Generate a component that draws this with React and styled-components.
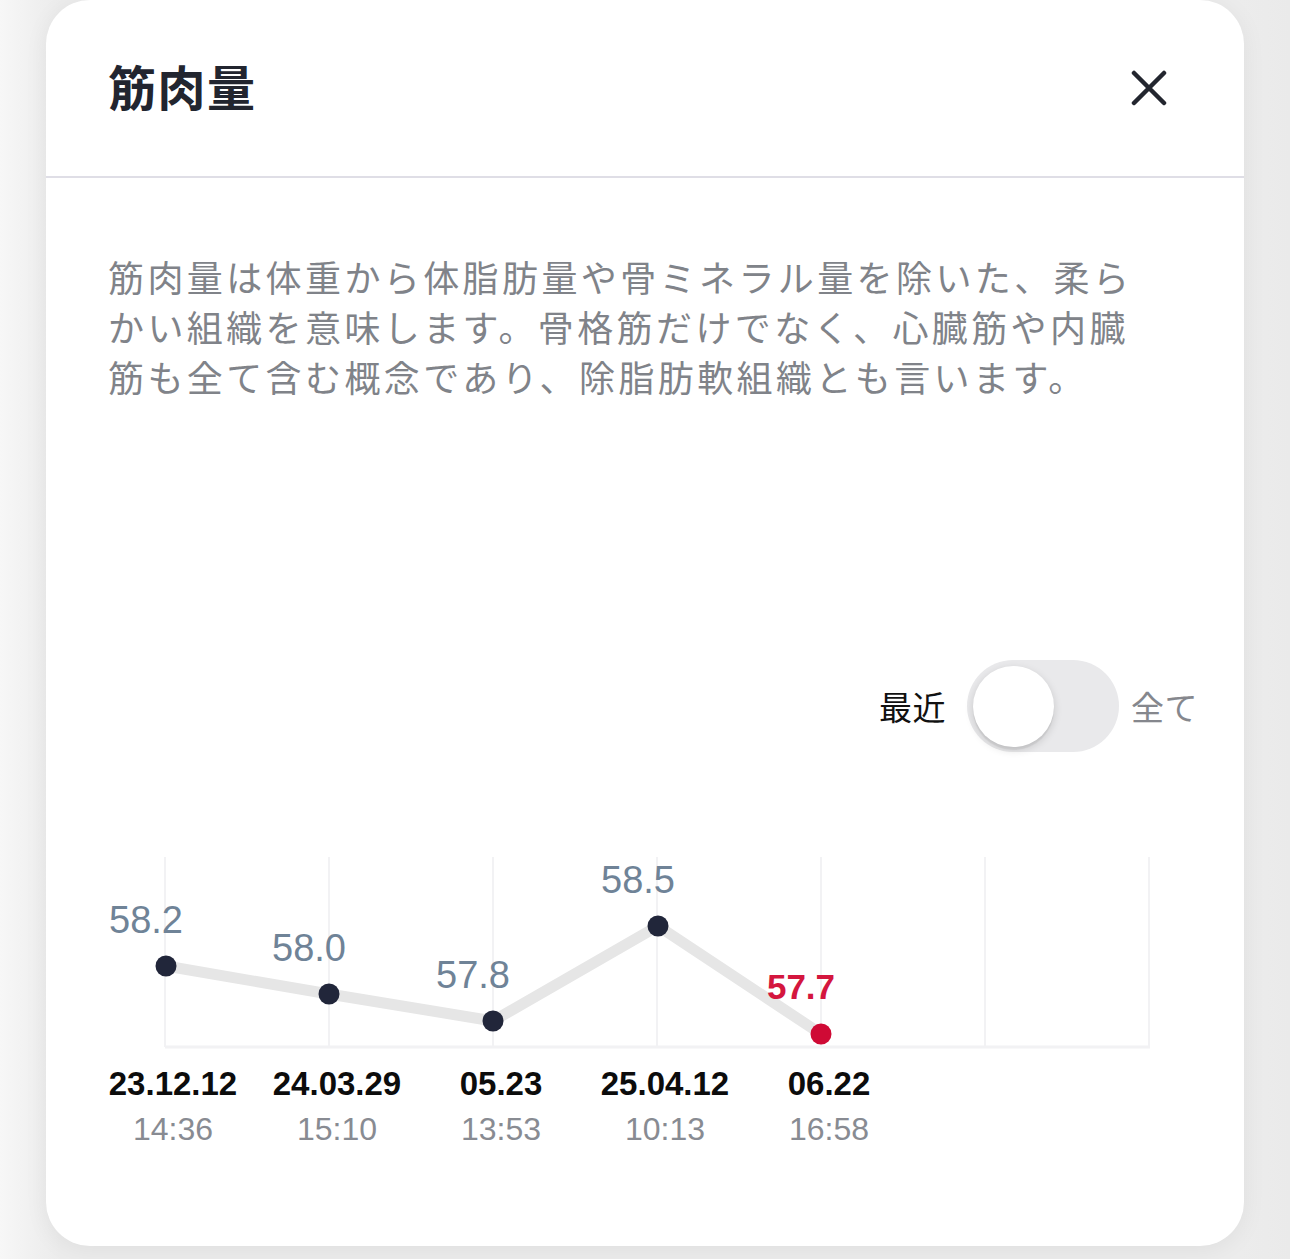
import React from "react";
import styled, { createGlobalStyle } from "styled-components";

const Global = createGlobalStyle`
  html, body { margin: 0; padding: 0; }
  body {
    background: #ececec;
    font-family: "Noto Sans CJK JP", "Noto Sans", sans-serif;
    width: 1290px;
    height: 1259px;
    overflow: hidden;
  }
`;

const Page = styled.div`
  width: 1290px;
  height: 1259px;
  background: linear-gradient(to right, #f7f7f7 0px, #efefef 40px, #ececec 60px, #ececec 1240px, #eaeaea 1290px);
  padding-left: 46px;
  box-sizing: border-box;
`;

const Modal = styled.div`
  width: 1198px;
  height: 1246px;
  background: #ffffff;
  border-radius: 44px;
  box-shadow: 0 4px 24px rgba(0, 0, 0, 0.06);
  display: flex;
  flex-direction: column;
  overflow: hidden;
`;

const Header = styled.div`
  height: 176px;
  flex: none;
  display: flex;
  align-items: center;
  justify-content: space-between;
  padding: 0 77px 0 62px;
  border-bottom: 2px solid #dfdee6;
`;

const Title = styled.h1`
  margin: 0 0 6px;
  font-size: 48px;
  font-weight: 700;
  color: #22252f;
  letter-spacing: 1.5px;
  line-height: 1;
`;

const CloseButton = styled.button`
  width: 36px;
  height: 36px;
  padding: 0;
  border: none;
  background: none;
  display: flex;
  cursor: pointer;
`;

const Body = styled.div`
  padding: 73px 46px 0 62px;
  display: flex;
  flex-direction: column;
`;

const Description = styled.p`
  margin: 0;
  max-width: 1040px;
  font-size: 36px;
  letter-spacing: 3.4px;
  line-height: 50px;
  color: #808389;
`;

const ToggleRow = styled.div`
  margin-top: 259px;
  display: flex;
  align-items: center;
  justify-content: flex-end;
`;

const ToggleLabel = styled.span`
  font-size: 33px;
  line-height: 1;
  color: ${(p) => (p.$active ? "#111111" : "#85878d")};
  letter-spacing: 0.5px;
`;

const Track = styled.div`
  width: 152px;
  height: 92px;
  border-radius: 46px;
  background: #e9e9eb;
  display: flex;
  align-items: center;
  padding-left: 6px;
  box-sizing: border-box;
  margin: 0 12px 0 21px;
`;

const Knob = styled.div`
  width: 81px;
  height: 81px;
  border-radius: 50%;
  background: #ffffff;
  box-shadow: 0 3px 8px rgba(0, 0, 0, 0.15), 0 3px 1px rgba(0, 0, 0, 0.06);
`;

const ChartWrap = styled.div`
  margin-top: 88px;
  margin-left: -62px;
  display: flex;
  flex-direction: column;
`;

const ChartSvg = styled.svg`
  display: block;
`;

const AxisRow = styled.div`
  display: grid;
  grid-template-columns: repeat(5, 164px);
  padding-left: 45px;
  margin-top: 9px;
`;

const AxisCell = styled.div`
  display: flex;
  flex-direction: column;
  align-items: center;
  font-family: "Liberation Sans", Arial, sans-serif;
`;

const DateText = styled.span`
  font-size: 33px;
  font-weight: 700;
  color: #0c0c0c;
  line-height: 40px;
`;

const TimeText = styled.span`
  font-size: 32px;
  color: #888b92;
  line-height: 50px;
`;

const points = [
  { v: "58.2", x: 120, y: 126, date: "23.12.12", time: "14:36" },
  { v: "58.0", x: 283, y: 154, date: "24.03.29", time: "15:10" },
  { v: "57.8", x: 447, y: 181, date: "05.23", time: "13:53" },
  { v: "58.5", x: 612, y: 86, date: "25.04.12", time: "10:13" },
  { v: "57.7", x: 775, y: 194, date: "06.22", time: "16:58", current: true },
];

const gridX = [119, 283, 447, 611, 775, 939, 1103];

function Chart() {
  const linePts = points.map((p) => `${p.x},${p.y}`).join(" ");
  return (
    <ChartSvg width="1198" height="215" viewBox="0 0 1198 215">
      {gridX.map((x) => (
        <line key={x} x1={x} y1="17" x2={x} y2="207" stroke="#f2f2f4" strokeWidth="2" />
      ))}
      <line x1="119" y1="207" x2="1104" y2="207" stroke="#f2f2f4" strokeWidth="3" />
      <polyline
        points={linePts}
        fill="none"
        stroke="#e6e6e6"
        strokeWidth="11"
        strokeLinejoin="round"
        strokeLinecap="round"
      />
      {points.map((p) => (
        <g key={p.v + p.x}>
          <circle cx={p.x} cy={p.y} r="10.5" fill={p.current ? "#cf0a35" : "#21263a"} />
          <text
            x={p.x - 20}
            y={p.y - (p.current ? 35 : 33)}
            textAnchor="middle"
            fontFamily="'Liberation Sans', Arial, sans-serif"
            fontSize={p.current ? 35 : 38}
            fontWeight={p.current ? 700 : 400}
            fill={p.current ? "#d4163e" : "#6f8397"}
          >
            {p.v}
          </text>
        </g>
      ))}
    </ChartSvg>
  );
}

export default function App() {
  return (
    <>
      <Global />
      <Page>
        <Modal>
          <Header>
            <Title>筋肉量</Title>
            <CloseButton aria-label="閉じる">
              <svg width="36" height="36" viewBox="0 0 36 36">
                <path
                  d="M3 3 L33 33 M33 3 L3 33"
                  stroke="#23262f"
                  strokeWidth="4.5"
                  strokeLinecap="round"
                  fill="none"
                />
              </svg>
            </CloseButton>
          </Header>
          <Body>
            <Description>
              筋肉量は体重から体脂肪量や骨ミネラル量を除いた、柔らかい組織を意味します。骨格筋だけでなく、心臓筋や内臓筋も全て含む概念であり、除脂肪軟組織とも言います。
            </Description>
            <ToggleRow>
              <ToggleLabel $active>最近</ToggleLabel>
              <Track>
                <Knob />
              </Track>
              <ToggleLabel>全て</ToggleLabel>
            </ToggleRow>
            <ChartWrap>
              <Chart />
              <AxisRow>
                {points.map((p) => (
                  <AxisCell key={p.date}>
                    <DateText>{p.date}</DateText>
                    <TimeText>{p.time}</TimeText>
                  </AxisCell>
                ))}
              </AxisRow>
            </ChartWrap>
          </Body>
        </Modal>
      </Page>
    </>
  );
}
